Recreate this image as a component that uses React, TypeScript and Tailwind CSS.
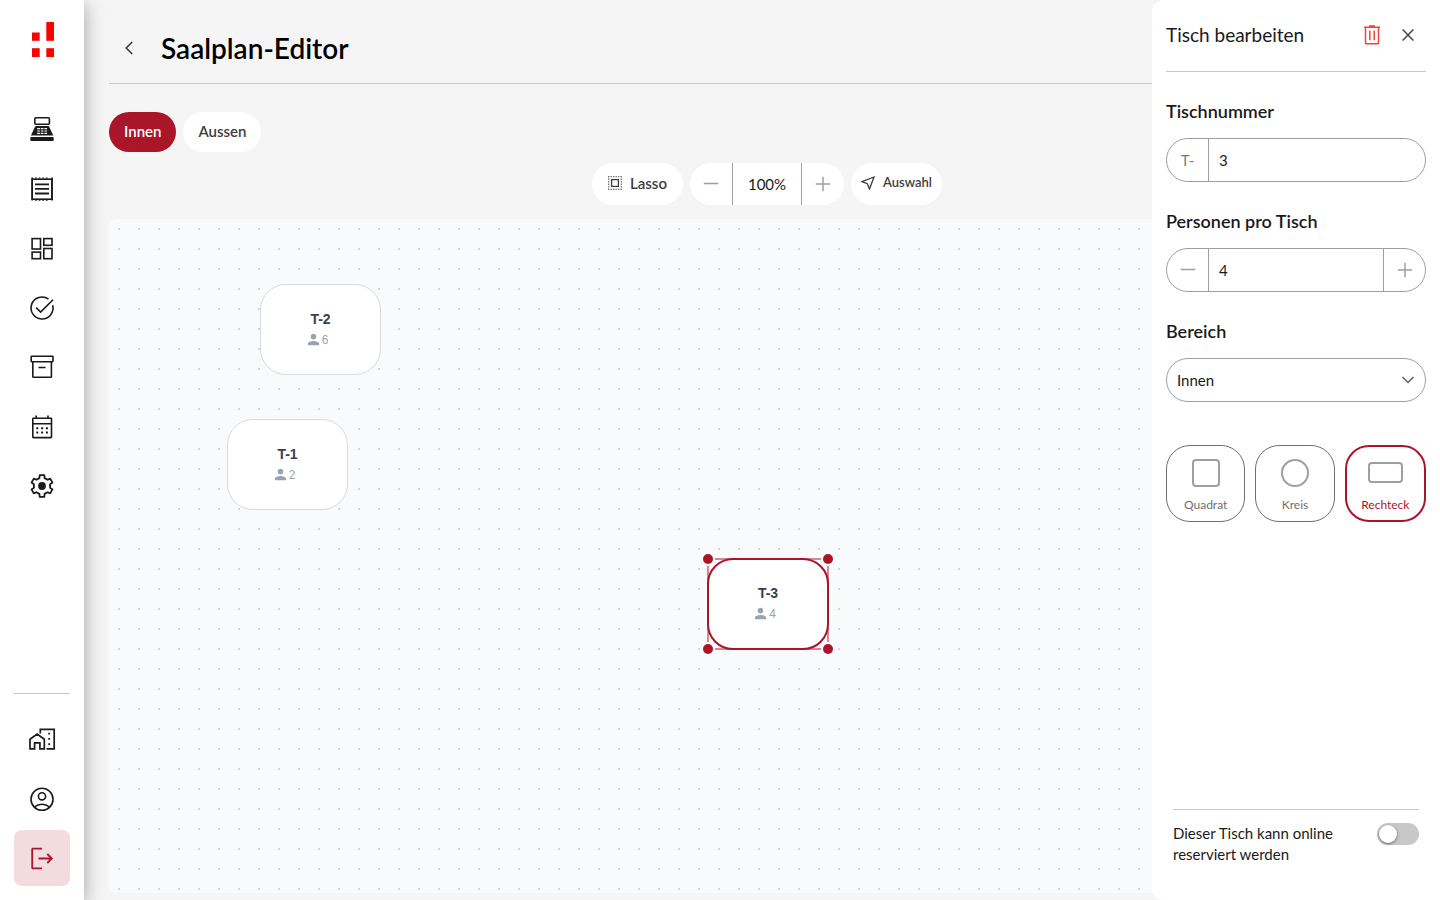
import React, { useState } from 'react';
import { MdPerson } from 'react-icons/md';

type IconProps = { children: React.ReactNode; width?: number };

const Icon: React.FC<IconProps> = ({ children, width = 1.6 }) => (
  <svg viewBox="0 0 28 28" className="w-7 h-7" fill="none" stroke="currentColor" strokeWidth={width} aria-hidden="true">
    {children}
  </svg>
);

const RegisterIcon = () => (
  <Icon>
    <rect x="6.8" y="2.8" width="14.6" height="6.4" rx="1" />
    <path d="M8.3 11h11.6c.6 0 1 .3 1.3.8l4.1 8.7H2.9L7 11.8c.3-.5.7-.8 1.3-.8z" fill="currentColor" stroke="none" />
    <rect x="2.3" y="22" width="23.4" height="4" rx="1" fill="currentColor" stroke="none" />
    <path d="M9.2 13.6h2.7M12.8 13.6h2.7M16.4 13.6h2.7M9.2 16h2.7M12.8 16h2.7M16.4 16h2.7M9.2 18.4h2.7M12.8 18.4h2.7M16.4 18.4h2.7" stroke="#fff" strokeWidth="1.2" />
  </Icon>
);

const ReceiptIcon = () => (
  <Icon>
    <rect x="4.2" y="4.2" width="19.8" height="20" />
    <path d="M4.2 2.6v22.9M24 2.6v22.9" />
    <path d="M7 3h14.5M7 25.2h14.5" strokeWidth="1.2" strokeDasharray="1.8 1.8" />
    <path d="M7 9.3h14M7 13.9h14M7 18.5h14" strokeWidth="1.8" />
  </Icon>
);

const DashboardIcon = () => (
  <Icon>
    <rect x="4.1" y="4.6" width="8.4" height="10.4" />
    <rect x="15.8" y="4.6" width="8.2" height="6.7" />
    <rect x="4.1" y="18.1" width="8.4" height="6.6" />
    <rect x="15.8" y="14.5" width="8.2" height="10.2" />
  </Icon>
);

const CheckIcon = () => (
  <Icon>
    <path d="M20.5 5.1A11 11 0 1 0 24.7 11.3" />
    <path d="M8.2 13.6l4.4 4.5L25 5.7" />
  </Icon>
);

const ArchiveIcon = () => (
  <Icon>
    <rect x="3.2" y="3.3" width="21.8" height="5.4" rx=".6" />
    <path d="M4.8 8.7v14.9c0 .4.3.7.7.7h17.2c.4 0 .7-.3.7-.7V8.7M10.5 14.5h7" />
  </Icon>
);

const CalendarIcon = () => (
  <Icon>
    <rect x="4.8" y="5.2" width="18.7" height="19.4" rx=".6" />
    <path d="M4.8 10.7h18.7M8.2 2.5v2.7M20 2.5v2.7" />
    <path d="M8.3 15.2h2M13.1 15.2h2M17.9 15.2h2M8.3 19.6h2M13.1 19.6h2M17.9 19.6h2" strokeWidth="2" />
  </Icon>
);

const SettingsIcon = () => (
  <Icon width={1.8}>
    <path
      d="M11.4 6.1L11.7 3.2H16.3L16.6 6.1L19.6 7.8L22.2 6.6L24.5 10.6L22.1 12.3V15.7L24.5 17.4L22.2 21.4L19.6 20.2L16.6 21.9L16.3 24.8H11.7L11.4 21.9L8.4 20.2L5.8 21.4L3.5 17.4L5.9 15.7V12.3L3.5 10.6L5.8 6.6L8.4 7.8z"
      strokeLinejoin="round"
    />
    <circle cx="14" cy="14" r="3.9" fill="currentColor" stroke="none" />
  </Icon>
);

const HomeWorkIcon = () => (
  <Icon width={1.7}>
    <path d="M2 23.8V14.2L9.2 9.1l7.1 5.1v9.6h-4.4v-6H6.6v6z" />
    <path d="M12.3 8.5V4.4h13.9v19.4h-7.7" />
    <path d="M21.2 7.8v1.8M21.2 13v1.8M21.2 18.3v1.8" strokeWidth="1.8" />
  </Icon>
);

const AccountIcon = () => (
  <Icon>
    <circle cx="14" cy="14.3" r="11" />
    <circle cx="14" cy="11.3" r="3.6" />
    <path d="M6.4 22c4.4-3.7 10.8-3.7 15.2 0" />
  </Icon>
);

const LogoutIcon = () => (
  <Icon width={1.8}>
    <path d="M14 4.7H4.7c-.3 0-.5.2-.5.5v18.6c0 .3.2.5.5.5H14M10.5 14.5h13.2M19.3 10l4.5 4.5-4.5 4.5" />
  </Icon>
);

const PlusMinus = ({ plus }: { plus?: boolean }) => (
  <svg viewBox="0 0 16 16" className="w-4 h-4" stroke="#9f9f9f" strokeWidth="1.5" fill="none" aria-hidden="true">
    <path d={plus ? 'M8 .8v14.4M.8 8h14.4' : 'M.8 7.5h14.4'} />
  </svg>
);

const mainNav = [
  { label: 'Kasse', icon: RegisterIcon },
  { label: 'Belege', icon: ReceiptIcon },
  { label: 'Dashboard', icon: DashboardIcon },
  { label: 'Aufgaben', icon: CheckIcon },
  { label: 'Archiv', icon: ArchiveIcon },
  { label: 'Kalender', icon: CalendarIcon },
  { label: 'Einstellungen', icon: SettingsIcon },
];

const tables = [
  { id: 'T-2', seats: 6, x: 151, y: 66 },
  { id: 'T-1', seats: 2, x: 118, y: 201 },
  { id: 'T-3', seats: 4, x: 599, y: 340 },
];

const Sidebar = () => (
  <aside className="relative z-10 flex flex-col items-center justify-between w-[84px] shrink-0 bg-white pt-[22px] pb-[14px] text-[#1a1a1a] shadow-[0_4px_18px_rgba(0,0,0,0.35)]">
    <div className="flex flex-col items-center gap-11">
      <svg viewBox="-2 0 24 35" className="w-6 h-[35px]" fill="#ff0000" aria-label="Logo">
        <rect x="0" y="10.5" width="7.7" height="8.3" />
        <rect x="14.3" y="0" width="7.7" height="18.8" />
        <rect x="0" y="26.2" width="7.7" height="8.8" />
        <rect x="14.3" y="26.2" width="7.7" height="8.8" />
      </svg>
      <nav className="flex flex-col justify-between h-[413px]">
        {mainNav.map(({ label, icon: NavIcon }) => (
          <a key={label} href="#" aria-label={label} className="flex items-center justify-center w-14 h-14 rounded-lg">
            <NavIcon />
          </a>
        ))}
      </nav>
    </div>
    <div className="flex flex-col gap-[17px] w-14">
      <hr className="border-[#c8c8c8]" />
      <div className="flex flex-col justify-between h-[175px]">
        <a href="#" aria-label="Betriebe" className="flex items-center justify-center w-14 h-14">
          <HomeWorkIcon />
        </a>
        <a href="#" aria-label="Profil" className="flex items-center justify-center w-14 h-14">
          <AccountIcon />
        </a>
        <button aria-label="Abmelden" className="flex items-center justify-center w-14 h-14 rounded-lg bg-[#f2dcde] text-[#aa1629]">
          <LogoutIcon />
        </button>
      </div>
    </div>
  </aside>
);

const TableNode = ({ id, seats, x, y, selected }: (typeof tables)[number] & { selected: boolean }) => (
  <div className="absolute w-[120px] h-[90px]" style={{ left: x, top: y }}>
    {selected && <div className="absolute -inset-px border-2 border-[#d48a94]" />}
    <div
      className={`absolute flex flex-col items-center bg-white rounded-[26px] font-['Liberation_Sans',Arial,sans-serif] ${
        selected ? '-inset-px pt-[25px] border-2 border-[#aa1629]' : 'left-0 -top-px -right-px bottom-0 pt-[26px] border border-[#d7dae0]'
      }`}
    >
      <span className="text-sm leading-4 font-bold text-[#374151]">{id}</span>
      <span className="flex items-center pt-1 pr-2 text-xs leading-4 text-[#9ca3af]">
        <MdPerson className="w-[17px] h-[17px]" />
        {seats}
      </span>
    </div>
    {selected && (
      <>
        <span className="absolute -left-[5px] -top-[5px] w-2.5 h-2.5 rounded-full bg-[#aa1629] ring-2 ring-[#f9fafc]" />
        <span className="absolute -right-[5px] -top-[5px] w-2.5 h-2.5 rounded-full bg-[#aa1629] ring-2 ring-[#f9fafc]" />
        <span className="absolute -left-[5px] -bottom-[5px] w-2.5 h-2.5 rounded-full bg-[#aa1629] ring-2 ring-[#f9fafc]" />
        <span className="absolute -right-[5px] -bottom-[5px] w-2.5 h-2.5 rounded-full bg-[#aa1629] ring-2 ring-[#f9fafc]" />
      </>
    )}
  </div>
);

const Toolbar = () => (
  <div className="flex justify-center gap-[7px] mt-[11px] text-[#3d3d3d]">
    <button className="flex items-center justify-center gap-2 w-[91px] h-[42px] pb-0.5 rounded-full bg-white text-[15px] font-semibold">
      <svg viewBox="0 0 14 14" className="w-3.5 h-3.5" fill="none" stroke="currentColor" aria-hidden="true">
        <rect x="3.6" y="3.6" width="6.8" height="6.8" strokeWidth="1.3" />
        <path d="M0 .7h14M0 13.3h14M.7 0v14M13.3 0v14" strokeWidth="1.2" strokeDasharray="1.4 1.1" opacity=".75" />
      </svg>
      Lasso
    </button>
    <div className="flex h-[42px] rounded-full bg-white">
      <button aria-label="Verkleinern" className="flex items-center justify-center w-[42px]">
        <PlusMinus />
      </button>
      <span className="flex items-center justify-center w-[70px] border-x border-[#9f9f9f] text-[15px] text-[#1a1a1a]">100%</span>
      <button aria-label="Vergrössern" className="flex items-center justify-center w-[42px]">
        <PlusMinus plus />
      </button>
    </div>
    <button className="flex items-center justify-center gap-2 w-[91px] h-[42px] pb-0.5 rounded-full bg-white text-[13px] font-semibold">
      <svg viewBox="0 0 14 14" className="w-3.5 h-3.5" fill="none" stroke="currentColor" strokeWidth="1.3" aria-hidden="true">
        <path d="M13 1L.9 5.6l5.4 2.1L8.5 13z" />
      </svg>
      Auswahl
    </button>
  </div>
);

const shapes = [
  { name: 'Quadrat', className: 'w-7 h-7 rounded' },
  { name: 'Kreis', className: 'w-7 h-7 rounded-full' },
  { name: 'Rechteck', className: 'w-[35px] h-[21px] my-[3px] rounded' },
];

const EditPanel = () => {
  const [shape, setShape] = useState('Rechteck');
  return (
    <section className="fixed right-0 inset-y-0 z-20 flex flex-col w-72 px-[14px] rounded-l-xl bg-white text-[#1a1a1a]">
      <header className="flex items-center justify-between h-[72px] pb-px border-b border-[#c8c8c8]">
        <h2 className="text-[19px]">Tisch bearbeiten</h2>
        <div className="flex items-center gap-3 pr-1.5">
          <button aria-label="Löschen" className="flex items-center justify-center w-6 h-6">
            <svg viewBox="0 0 18 20" className="w-[18px] h-5" fill="none" stroke="#f44336" strokeWidth="1.5" aria-hidden="true">
              <path d="M1 2.2h16M6 1h6M2.5 2.2V18c0 .5.3.8.8.8h11.4c.5 0 .8-.3.8-.8V2.2M6.8 5.5v9.8M11.2 5.5v9.8" />
            </svg>
          </button>
          <button aria-label="Schliessen" className="flex items-center justify-center w-6 h-6">
            <svg viewBox="0 0 12 12" className="w-3 h-3" stroke="#3d3d3d" strokeWidth="1.4" aria-hidden="true">
              <path d="M.6.6l10.8 10.8M11.4.6L.6 11.4" />
            </svg>
          </button>
        </div>
      </header>

      <div className="flex flex-col gap-[27px] pt-[27px]">
        <div className="flex flex-col gap-[15px]">
          <label htmlFor="number" className="text-lg leading-6 font-semibold">Tischnummer</label>
          <div className="flex h-11 border border-[#9f9f9f] rounded-full overflow-hidden text-[15px]">
            <span className="flex items-center justify-center w-[42px] border-r border-[#9f9f9f] text-[#7a7a7a]">T-</span>
            <input id="number" defaultValue="3" className="flex-1 min-w-0 px-2.5 outline-none" />
          </div>
        </div>

        <div className="flex flex-col gap-[15px]">
          <label htmlFor="seats" className="text-lg leading-6 font-semibold">Personen pro Tisch</label>
          <div className="flex h-11 border border-[#9f9f9f] rounded-full overflow-hidden text-[15px]">
            <button aria-label="Weniger" className="flex items-center justify-center w-[42px] border-r border-[#9f9f9f]">
              <PlusMinus />
            </button>
            <input id="seats" defaultValue="4" className="flex-1 min-w-0 px-2.5 outline-none" />
            <button aria-label="Mehr" className="flex items-center justify-center w-[42px] border-l border-[#9f9f9f]">
              <PlusMinus plus />
            </button>
          </div>
        </div>

        <div className="flex flex-col gap-[15px]">
          <label htmlFor="area" className="text-lg leading-6 font-semibold">Bereich</label>
          <div className="relative">
            <select id="area" className="w-full h-11 px-2.5 appearance-none border border-[#9f9f9f] rounded-full bg-white text-[15px]">
              <option>Innen</option>
              <option>Aussen</option>
            </select>
            <svg viewBox="0 0 12 8" className="absolute right-3 top-[18px] w-3 h-2 pointer-events-none" fill="none" stroke="#5f5f5f" strokeWidth="1.5" aria-hidden="true">
              <path d="M.5 1L6 6.5 11.5 1" />
            </svg>
          </div>
        </div>
      </div>

      <fieldset className="flex gap-2.5 mt-[43px]">
        {shapes.map(({ name, className }) => (
          <label
            key={name}
            className={`flex flex-1 flex-col items-center justify-between h-[77px] rounded-3xl text-xs leading-4 ${
              shape === name ? 'border-2 border-[#aa1629] pt-3 pb-[7px] text-[#aa1629]' : 'border border-[#6f6f6f] pt-[13px] pb-2 text-[#6f6f6f]'
            }`}
          >
            <input type="radio" name="shape" className="sr-only" checked={shape === name} onChange={() => setShape(name)} />
            <span className={`border-2 border-[#9f9f9f] ${className}`} />
            {name}
          </label>
        ))}
      </fieldset>

      <div className="flex items-start justify-between mt-auto mx-[7px] mb-[35px] pt-[13px] border-t border-[#c8c8c8]">
        <label htmlFor="online" className="w-44 text-[15px] leading-[21px]">Dieser Tisch kann online reserviert werden</label>
        <input
          id="online"
          type="checkbox"
          role="switch"
          className="appearance-none w-[42px] h-[22px] p-0.5 rounded-full bg-[#c8c8c8] before:block before:w-[18px] before:h-[18px] before:rounded-full before:bg-white before:shadow-[0_1px_3px_rgba(0,0,0,0.5)] checked:before:ml-5"
        />
      </div>
    </section>
  );
};

export default function App() {
  const [area, setArea] = useState('Innen');
  return (
    <div className="flex min-h-screen bg-[#f5f5f5] font-[Lato,sans-serif]">
      <Sidebar />
      <main className="flex flex-col flex-1 min-w-0 pl-[25px] pr-[15px] pb-[7px]">
        <header className="flex items-center gap-4 h-[84px] pt-3 pl-1 border-b border-[#c8c8c8]">
          <button aria-label="Zurück" className="flex items-center justify-center w-8 h-8">
            <svg viewBox="0 0 8 14" className="w-2 h-3.5" fill="none" stroke="#3d3d3d" strokeWidth="1.6" aria-hidden="true">
              <path d="M7.2 1L1.2 7l6 6" />
            </svg>
          </button>
          <h1 className="text-[28px] leading-9 font-semibold text-black">Saalplan-Editor</h1>
        </header>

        <div className="flex gap-[7px] mt-7">
          {['Innen', 'Aussen'].map((name) => (
            <button
              key={name}
              onClick={() => setArea(name)}
              className={`h-10 px-[15px] pb-0.5 rounded-full text-[15px] font-semibold ${area === name ? 'bg-[#aa1629] text-white' : 'bg-white text-[#3d3d3d]'}`}
            >
              {name}
            </button>
          ))}
        </div>

        <Toolbar />

        {/* Floor plan canvas */}
        <div className="relative flex-1 mt-[14px] rounded-lg overflow-hidden bg-[#f9fafc] bg-[radial-gradient(#d1d5db_1px,transparent_1px)] bg-[size:20px_20px]">
          {tables.map((t) => (
            <TableNode key={t.id} {...t} selected={t.id === 'T-3'} />
          ))}
        </div>
      </main>
      <EditPanel />
    </div>
  );
}
